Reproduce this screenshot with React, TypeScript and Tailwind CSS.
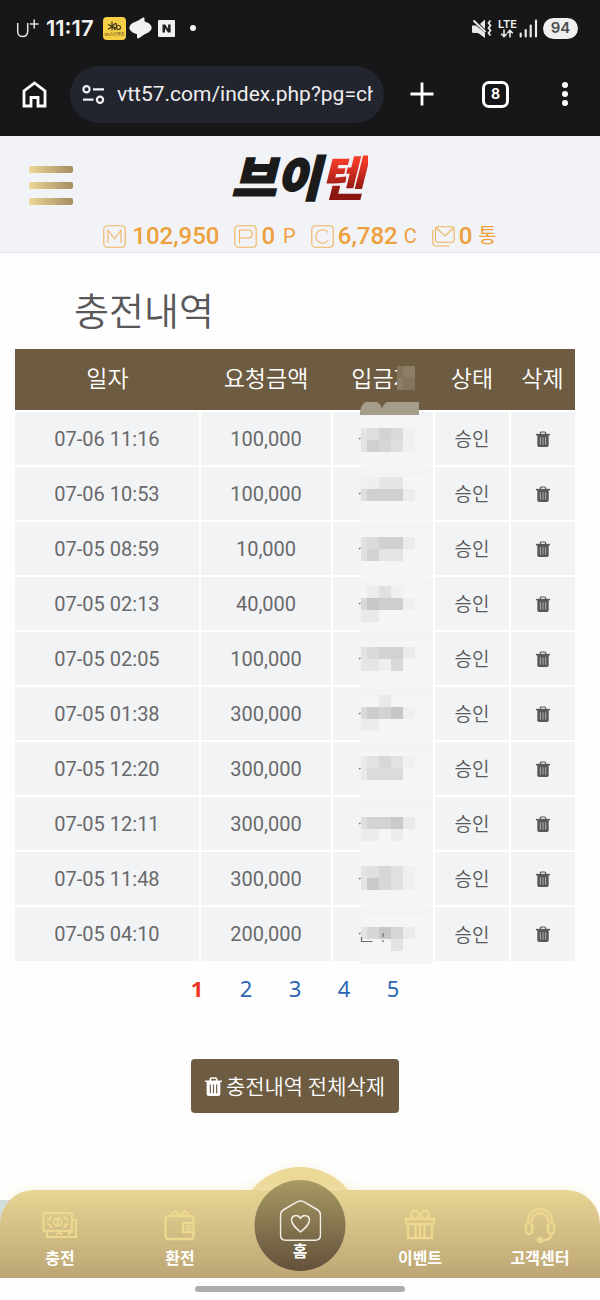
import React from 'react';

type Block = [number, number, number, number, string];

const rows: { date: string; amount: string; mask: Block[] }[] = [
  { date: '07-06 11:16', amount: '100,000', mask: [[0, 16, 6, 24, '#e3e4e5'], [6, 16, 12, 12, '#dddee0'], [18, 16, 12, 12, '#d2d3d5'], [30, 16, 12, 12, '#d9dadc'], [6, 28, 12, 12, '#cfd0d2'], [18, 28, 12, 12, '#d5d6d8'], [30, 28, 12, 12, '#dedfe1'], [42, 16, 12, 24, '#eff0f2']] },
  { date: '07-06 10:53', amount: '100,000', mask: [[0, 10, 18, 12, '#eeeff1'], [18, 10, 24, 12, '#e4e5e7'], [0, 22, 6, 12, '#dddee0'], [6, 22, 36, 12, '#cfd0d2'], [42, 22, 12, 12, '#ecedef']] },
  { date: '07-05 08:59', amount: '10,000', mask: [[0, 15, 6, 24, '#dfe0e2'], [6, 15, 12, 12, '#d9dadc'], [18, 15, 24, 12, '#cfd0d2'], [6, 27, 12, 12, '#d2d3d5'], [18, 27, 24, 12, '#e3e4e6'], [42, 15, 12, 12, '#eaebed']] },
  { date: '07-05 02:13', amount: '40,000', mask: [[6, 9, 12, 12, '#ecedef'], [18, 9, 12, 12, '#dfe0e2'], [30, 9, 12, 12, '#eff0f2'], [0, 21, 6, 12, '#d8d9db'], [6, 21, 12, 12, '#c7c8ca'], [18, 21, 24, 12, '#cdced0'], [42, 21, 12, 12, '#eff0f2'], [0, 33, 18, 12, '#e8e9eb']] },
  { date: '07-05 02:05', amount: '100,000', mask: [[0, 15, 6, 12, '#e2e3e5'], [6, 15, 12, 12, '#d9dadc'], [18, 15, 24, 12, '#d1d2d4'], [42, 15, 12, 12, '#eaebed'], [0, 27, 18, 12, '#e4e5e7'], [18, 27, 12, 12, '#eeeff1'], [30, 27, 12, 12, '#d8d9db']] },
  { date: '07-05 01:38', amount: '300,000', mask: [[18, 8, 12, 12, '#e8e9eb'], [0, 20, 6, 12, '#d8d9db'], [6, 20, 12, 12, '#cbccce'], [18, 20, 12, 12, '#d2d3d5'], [30, 20, 12, 12, '#c6c7c9'], [42, 20, 12, 12, '#eeeff1'], [0, 32, 18, 12, '#ebecee']] },
  { date: '07-05 12:20', amount: '300,000', mask: [[0, 14, 6, 24, '#e9eaec'], [6, 14, 12, 12, '#e1e2e4'], [18, 14, 12, 12, '#d6d7d9'], [30, 14, 12, 12, '#e1e2e4'], [6, 26, 36, 12, '#dadbdd'], [42, 14, 12, 12, '#eff0f2']] },
  { date: '07-05 12:11', amount: '300,000', mask: [[0, 20, 6, 12, '#dddee0'], [6, 20, 24, 12, '#d2d3d5'], [30, 20, 12, 12, '#c9cacc'], [42, 20, 12, 12, '#e9eaec'], [0, 32, 18, 12, '#ebecee'], [30, 32, 12, 12, '#ebecee']] },
  { date: '07-05 11:48', amount: '300,000', mask: [[0, 14, 6, 24, '#e3e4e6'], [6, 14, 12, 12, '#dfe0e2'], [18, 14, 12, 12, '#d6d7d9'], [30, 14, 12, 12, '#dfe0e2'], [6, 26, 12, 12, '#c9cacc'], [18, 26, 12, 12, '#d6d7d9'], [30, 26, 12, 12, '#dfe0e2'], [42, 14, 12, 24, '#eff0f2']] },
  { date: '07-05 04:10', amount: '200,000', mask: [[0, 20, 6, 12, '#e3e4e6'], [6, 20, 12, 12, '#d5d6d8'], [18, 20, 12, 12, '#c6c7c9'], [30, 20, 12, 12, '#d5d6d8'], [42, 20, 12, 12, '#eaebed'], [30, 32, 12, 12, '#e2e3e5']] },
];

const pages = [2, 3, 4, 5];

const TrashIcon = ({ className }: { className?: string }) => (
  <svg className={className} viewBox="0 0 16 18" fill="none" stroke="currentColor" aria-hidden="true">
    <path d="M5 3.600V2.200Q5 1 6.200 1h3.600Q11 1 11 2.200V3.600" strokeWidth="1.400" />
    <path d="M0 4h16" strokeWidth="1.700" />
    <path d="M1.500 4.500h13v11.500q0 2-2 2h-9q-2 0-2-2z" fill="currentColor" stroke="none" />
    <path d="M5 7v8.500M8 7v8.500M11 7v8.500" stroke="white" strokeOpacity="0.600" strokeWidth="1" />
  </svg>
);

const ButtonTrashIcon = () => (
  <svg className="h-[19px] w-[17px]" viewBox="0 0 16 18" fill="none" aria-hidden="true">
    <path d="M5 3.600V2.200Q5 1 6.200 1h3.600Q11 1 11 2.200V3.600M0 4h16" stroke="white" strokeWidth="1.500" />
    <path d="M1.500 4.500h13v11.500q0 2-2 2h-9q-2 0-2-2z" fill="white" />
    <path d="M5 7v8.500M8 7v8.500M11 7v8.500" stroke="#6d5c41" strokeWidth="1.100" />
  </svg>
);

const LetterIcon = ({ d }: { d: string }) => (
  <svg className="size-[23px]" viewBox="0 0 23 23" fill="none" stroke="#efb45f" strokeWidth="1.100" aria-hidden="true">
    <rect x="0.800" y="0.800" width="21.400" height="21.400" rx="3.500" />
    <path d={d} strokeLinecap="round" strokeLinejoin="round" />
  </svg>
);

const StatusBar = () => (
  <div className="flex h-14 items-center justify-between pl-4 pr-[22px] text-[#f1f1f1]">
    <div className="flex items-center">
      <svg className="h-[19px] w-[23px]" viewBox="0 0 23 19" fill="none" stroke="#e4e4e4" strokeWidth="1.500" aria-label="U+">
        <path d="M1.700 4v8.500c0 6.800 10 6.800 10 0V4M18.200 0.500v9M13.800 5h8.800" />
      </svg>
      <span className="ml-[7px] font-['Inter'] text-[22px] font-semibold leading-6">11:17</span>
      <svg className="ml-[9px] size-[23px]" viewBox="0 0 23 23" aria-hidden="true">
        <rect width="23" height="23" rx="4" fill="#f6cf45" />
        <path d="M9 4.500v9M5 7.500l8 3.500M13 6l-8 6.500M9 9l3.500 4M13.500 6.500v5.500" stroke="#43391f" strokeWidth="1.200" fill="none" />
        <circle cx="15.500" cy="10.500" r="2" stroke="#43391f" strokeWidth="1.200" fill="none" />
        <text x="11.500" y="19" fontSize="4" textAnchor="middle" fill="#54471f" fontFamily="Noto Sans CJK KR, sans-serif">KB스타뱅킹</text>
      </svg>
      <svg className="ml-[3px] h-[22px] w-[23px]" viewBox="0 0 23 22" fill="#f1f1f1" aria-hidden="true">
        <ellipse cx="11.500" cy="10.800" rx="11.200" ry="6.800" />
        <path d="M6 5.500L14 0.500Q15.500 0 15.500 1.500V6zM8 15v5Q8 22 9.800 21.200L17.500 16z" />
      </svg>
      <svg className="ml-1.5 size-[17px]" viewBox="0 0 17 17" aria-hidden="true">
        <rect width="17" height="17" rx="1" fill="#f1f1f1" />
        <path d="M4.500 12.500v-8h2.700l2.900 4.200V4.500h2.500v8H10L7 8.300v4.200z" fill="#202022" />
      </svg>
      <span className="ml-[15px] size-1.5 rounded-full bg-[#f1f1f1]" />
    </div>
    <div className="flex items-center">
      <svg className="h-[19px] w-5" viewBox="0 0 20 19" fill="#e9e9e9" aria-hidden="true">
        <path d="M0 6.500h4L13 14v5L6 14H1.500Q0 14 0 12.500zM8 5l5-4.500V10z" />
        <path d="M1.500 1.500l12 11.500" stroke="#e9e9e9" strokeWidth="2" />
        <path d="M18.500 1.500l-2 2.500 2 2.500-2 2.500 2 2.500-2 2.500 2 2.500" fill="none" stroke="#e9e9e9" strokeWidth="1.800" />
      </svg>
      <span className="ml-1.5 flex flex-col items-center">
        <span className="font-['Inter'] text-[11px] font-semibold leading-[10px]">LTE</span>
        <svg className="h-[9px] w-3.5" viewBox="0 0 14 9" fill="none" stroke="#e9e9e9" strokeWidth="1.600" aria-hidden="true">
          <path d="M4 0.500v7M1.200 4.800L4 7.600l2.800-2.800M10 8.500v-7M7.200 4.200L10 1.400l2.800 2.800" />
        </svg>
      </span>
      <svg className="ml-0.5 h-[19px] w-[19px]" viewBox="0 0 19 19" fill="none" stroke="#e9e9e9" strokeWidth="2.200" strokeLinecap="round" aria-hidden="true">
        <path d="M1.700 17.500v-3M6.700 17.500v-6.500M11.700 17.500V6.500M17 17.500V1.500" />
      </svg>
      <span className="ml-[5px] flex h-[21px] w-[35px] items-center justify-center rounded-full bg-[#efefef] font-['Inter'] text-[15px] font-semibold text-[#4a4a4c]">94</span>
    </div>
  </div>
);

const BrowserBar = () => (
  <div className="flex h-20 items-center justify-between pb-1 pl-[22px] pr-8">
    <button type="button" aria-label="홈페이지">
      <svg className="h-[27px] w-[25px]" viewBox="0 0 25 27" fill="none" stroke="white" strokeWidth="2.800" aria-hidden="true">
        <path d="M2 25V10L12.500 2 23 10v15h-7v-8.500H9V25z" />
      </svg>
    </button>
    <div className="ml-[23px] flex h-[57px] min-w-0 flex-1 items-center gap-3 rounded-full bg-[#22252d] pl-3 pr-[11px]">
      <svg className="h-[19px] w-[23px] shrink-0" viewBox="0 0 23 19" fill="none" stroke="#f0f0f2" strokeWidth="2.200" aria-hidden="true">
        <circle cx="4.500" cy="4.300" r="3.100" />
        <path d="M11 4.300h11M1 14.700h10.500" />
        <circle cx="18" cy="14.700" r="3.100" />
      </svg>
      <input
        type="text"
        aria-label="주소"
        readOnly
        value="vtt57.com/index.php?pg=charge"
        className="h-8 w-full min-w-0 bg-transparent font-['Roboto'] text-[21px] text-[#eeeef0] outline-none"
      />
    </div>
    <button type="button" aria-label="새 탭" className="ml-[26px]">
      <svg className="size-6" viewBox="0 0 24 24" stroke="white" strokeWidth="2.800" aria-hidden="true">
        <path d="M12 0.500v23M0.500 12h23" />
      </svg>
    </button>
    <button type="button" aria-label="탭 8개" className="ml-12 flex size-[27px] items-center justify-center rounded-[7px] border-[3px] border-white font-['Inter'] text-sm font-bold text-white">
      8
    </button>
    <button type="button" aria-label="메뉴" className="ml-[53px]">
      <svg className="h-6 w-1.5" viewBox="0 0 6 24" fill="white" aria-hidden="true">
        <circle cx="3" cy="3" r="3" />
        <circle cx="3" cy="12" r="3" />
        <circle cx="3" cy="21" r="3" />
      </svg>
    </button>
  </div>
);

const SiteHeader = () => (
  <header className="border-b border-[#e4e5e8] bg-[#f2f3f6]">
    <div className="grid grid-cols-[1fr_auto_1fr] items-center px-[29px] pt-[5px]">
      <button type="button" aria-label="전체메뉴" className="mt-5 flex w-11 flex-col gap-[9px]">
        <span className="h-[7px] w-full rounded-[2px] bg-gradient-to-r from-[#ebd896] to-[#a58c62]" />
        <span className="h-[7px] w-full rounded-[2px] bg-gradient-to-r from-[#ebd896] to-[#a58c62]" />
        <span className="h-[7px] w-full rounded-[2px] bg-gradient-to-r from-[#ebd896] to-[#a58c62]" />
      </button>
      <a href="#" className="flex h-[68px] items-center text-[48px] font-black italic leading-[68px] text-[#1b1b1b]">
        <span className="[-webkit-text-stroke:2px_#1b1b1b]">브이</span>
        <span className="bg-gradient-to-b from-[#f23a28] from-30% to-[#8c1712] to-75% bg-clip-text pr-1 text-transparent">텐</span>
      </a>
    </div>
    <div className="mt-[11px] flex h-8 items-center justify-center font-['Roboto','Noto_Sans_CJK_KR',sans-serif] text-2xl font-medium text-[#eda03b]">
      <LetterIcon d="M5 17.500V5l6.500 9L18 5v12.500" />
      <span className="ml-1.5">102,950</span>
      <span className="ml-[15px] flex"><LetterIcon d="M5.500 18V5H14c5.500 0 5.500 8 0 8H5.500" /></span>
      <span className="ml-1">0</span>
      <span className="ml-2 text-xl font-normal">P</span>
      <span className="ml-[15px] flex"><LetterIcon d="M17 7.500c-4-5-12-2.500-12 4s8 9 12 4" /></span>
      <span className="ml-1">6,782</span>
      <span className="ml-1.5 text-xl font-normal">C</span>
      <svg className="ml-[15px] h-[21px] w-[23px]" viewBox="0 0 23 21" fill="none" stroke="#efb45f" strokeWidth="1.100" aria-hidden="true">
        <rect x="3.500" y="0.800" width="18.700" height="15.500" rx="2.500" />
        <path d="M4.500 2l8.500 8 8.500-8M0.800 4v12.500c0 2 1.500 3.500 3.500 3.500H17" strokeLinecap="round" />
      </svg>
      <span className="ml-1">0</span>
      <span className="ml-1.5 text-xl font-normal">통</span>
    </div>
  </header>
);

const ChargeTable = () => (
  <table className="mt-4 w-full table-fixed border-collapse text-center text-[#58585a]">
    <colgroup>
      <col className="w-[185px]" />
      <col className="w-[132px]" />
      <col className="w-[102px]" />
      <col className="w-[76px]" />
      <col className="w-[65px]" />
    </colgroup>
    <thead>
      <tr className="h-[62px] bg-[#6d5c41] text-[23px] leading-8 text-white">
        <th className="pb-1.5 font-[350]">일자</th>
        <th className="pb-1.5 font-[350]">요청금액</th>
        <th className="relative whitespace-nowrap pb-1.5 font-[350]">
          입금자
          <svg className="absolute left-7 top-[17px] h-[50px] w-[60px]" viewBox="0 0 60 50" aria-hidden="true">
            <path d="M37 0h18v24H37z" fill="#84745b" />
            <path d="M37 12h6v12h-6zM43 0h12v12H43z" fill="#8c7d66" />
            <path d="M0 49v-4q2-8 6-9h11q4 2 5 7 1-5 5-7h32v13z" fill="#a69c8a" />
          </svg>
        </th>
        <th className="pb-1.5 font-[350]">상태</th>
        <th className="pb-1.5 font-[350]">삭제</th>
      </tr>
    </thead>
    <tbody>
      {rows.map((row) => (
        <tr key={row.date} className="h-[55px] border-t-2 border-white bg-[#f2f3f5]">
          <td className="border-r-2 border-white font-['Roboto'] text-xl font-normal text-[#69696b]">{row.date}</td>
          <td className="border-r-2 border-white font-['Roboto'] text-xl font-normal text-[#69696b]">{row.amount}</td>
          <td className="relative border-r-2 border-white">
            <svg className="absolute left-6 top-0 h-[57px] w-[74px]" viewBox="-4 0 74 57" aria-label="비공개">
              <path d="M0 9h70v48H0z" fill="#f4f5f7" />
              {row.mask.map(([x, y, w, h, fill]) => (
                <rect key={`${x}-${y}`} x={x} y={y} width={w} height={h} fill={fill} />
              ))}
              <path d="M-2 27l1.500-1" stroke="#6a6a6c" strokeWidth="1.200" />
              {row === rows[rows.length - 1] && (
                <path d="M0.500 30v4.500h11M22 26v4M22 33v2" fill="none" stroke="#6a6a6c" strokeWidth="1.200" />
              )}
            </svg>
          </td>
          <td className="border-r-2 border-white text-[19px] font-[350]">승인</td>
          <td>
            <button type="button" aria-label="삭제" className="mx-auto block">
              <TrashIcon className="h-4 w-3.5" />
            </button>
          </td>
        </tr>
      ))}
    </tbody>
  </table>
);

const CashIcon = () => (
  <svg className="h-7 w-9" viewBox="0 0 36 28" fill="none" stroke="#ecd98f" strokeWidth="2.200" aria-hidden="true">
    <path d="M5 20v6h29V9h-4" />
    <rect x="1.500" y="2" width="28.500" height="18" />
    <circle cx="15.700" cy="11" r="4" />
    <path d="M15.700 7v8M5 9q4-.5 4-4M26.500 9q-4-.5-4-4M5 13q4 .5 4 4M26.500 13q-4 .5-4 4M14 24q3-4 6 0M26 24q1-3 5-3" />
  </svg>
);

const WalletIcon = () => (
  <svg className="size-8" viewBox="0 0 32 32" fill="none" stroke="#ecd98f" strokeWidth="2.400" strokeLinejoin="round" aria-hidden="true">
    <rect x="1.500" y="7" width="28" height="23" rx="3" />
    <path d="M7 6l4-4 5 4 5-4 4 4M30 14H19v9h11" />
    <circle cx="24.500" cy="18.500" r="2" strokeWidth="1.600" />
  </svg>
);

const GiftIcon = () => (
  <svg className="size-8" viewBox="0 0 32 32" fill="none" stroke="#ecd98f" strokeWidth="2.400" aria-hidden="true">
    <path d="M2 10h28v5H2zM4 15h24v14H4zM11.500 15v14M16 15v14M20.500 15v14" />
    <circle cx="11" cy="5.500" r="3.800" />
    <circle cx="21" cy="5.500" r="3.800" />
  </svg>
);

const HeadsetIcon = () => (
  <svg className="h-9 w-8" viewBox="0 0 32 36" fill="none" stroke="#ecd98f" strokeWidth="2.400" aria-hidden="true">
    <path d="M4 16C3 -2.500 29 -2.500 28 16M8 15C8 3 24 3 24 15M28 27q-1 6-10 6.500" />
    <rect x="2" y="16" width="6" height="11" rx="3" />
    <rect x="24" y="16" width="6" height="11" rx="3" />
    <circle cx="16" cy="33.200" r="2" fill="#ecd98f" />
  </svg>
);

const NavItem = ({ label, children }: { label: string; children: React.ReactNode }) => (
  <a href="#" className="flex flex-col items-center pt-[17px] text-base font-bold leading-6 text-white">
    <span className="flex h-9 items-center">{children}</span>
    <span className="mt-0.5">{label}</span>
  </a>
);

const BottomNav = () => (
  <nav className="relative mt-auto pt-[23px]">
    <div className="absolute left-0 top-[33px] h-10 w-8 bg-[#cddde3]" />
    <div className="absolute left-1/2 top-0 h-[62px] w-[124px] -translate-x-1/2 rounded-t-full bg-[#ecd998] shadow-[0_0_8px_#f3e9c080]" />
    <div className="relative grid h-[88px] grid-cols-5 rounded-t-[34px] bg-gradient-to-b from-[#e8d594] to-[#bca574] shadow-[0_-4px_10px_#f3e9c050]">
      <NavItem label="충전"><CashIcon /></NavItem>
      <NavItem label="환전"><WalletIcon /></NavItem>
      <div />
      <NavItem label="이벤트"><GiftIcon /></NavItem>
      <NavItem label="고객센터"><HeadsetIcon /></NavItem>
    </div>
    <a href="#" className="absolute left-1/2 top-[13px] flex size-[91px] -translate-x-1/2 flex-col items-center rounded-full bg-gradient-to-b from-[#a89b64] to-[#64513c] pt-5 text-base font-bold leading-[18px] text-white">
      <svg className="h-[41px] w-[42px]" viewBox="0 0 42 41" fill="none" stroke="#f1eee6" strokeWidth="1.500" strokeLinejoin="round" aria-hidden="true">
        <path d="M18 1.700Q21 0.200 24 1.700L37.500 9.500Q41 11.500 41 15.500V35q0 5.200-5.200 5.200H6.200Q1 40.200 1 35V15.500Q1 11.500 4.500 9.500z" />
        <path d="M21 32c-5-4.300-9-7.800-9-12 0-5 6.500-6 9-1.500 2.500-4.500 9-3.500 9 1.500 0 4.200-4 7.700-9 12z" />
      </svg>
      <span>홈</span>
    </a>
  </nav>
);

const App = () => {
  return (
    <div className="flex min-h-screen flex-col bg-[#fefefe] font-['Noto_Sans_CJK_KR',sans-serif]">
      <div className="bg-[#17171a]">
        <StatusBar />
        <BrowserBar />
      </div>
      <SiteHeader />

      <main className="flex flex-col items-center pl-[15px] pr-[25px] pt-8">
        <h1 className="w-full pl-[59px] text-[38px] font-[350] leading-[48px] text-[#58585a]">충전내역</h1>
        <ChargeTable />

        <div className="mt-[11px] flex font-['Noto_Sans'] text-[22px] leading-8 text-[#2b65b3]">
          <a href="#" aria-current="page" className="w-[49px] text-center font-bold text-[#ee3224]">1</a>
          {pages.map((page) => (
            <a key={page} href="#" className="w-[49px] text-center">{page}</a>
          ))}
        </div>

        <button type="button" className="mb-8 mt-[55px] flex h-[54px] items-center gap-1 rounded-[4px] bg-[#6d5c41] px-3.5 text-[21px] font-[350] text-white">
          <ButtonTrashIcon />
          충전내역 전체삭제
        </button>
      </main>

      <BottomNav />
      <div className="flex h-[22px] justify-center pt-2">
        <div className="h-1.5 w-[35%] rounded-full bg-[#adadad]" />
      </div>
    </div>
  );
};

export default App;
